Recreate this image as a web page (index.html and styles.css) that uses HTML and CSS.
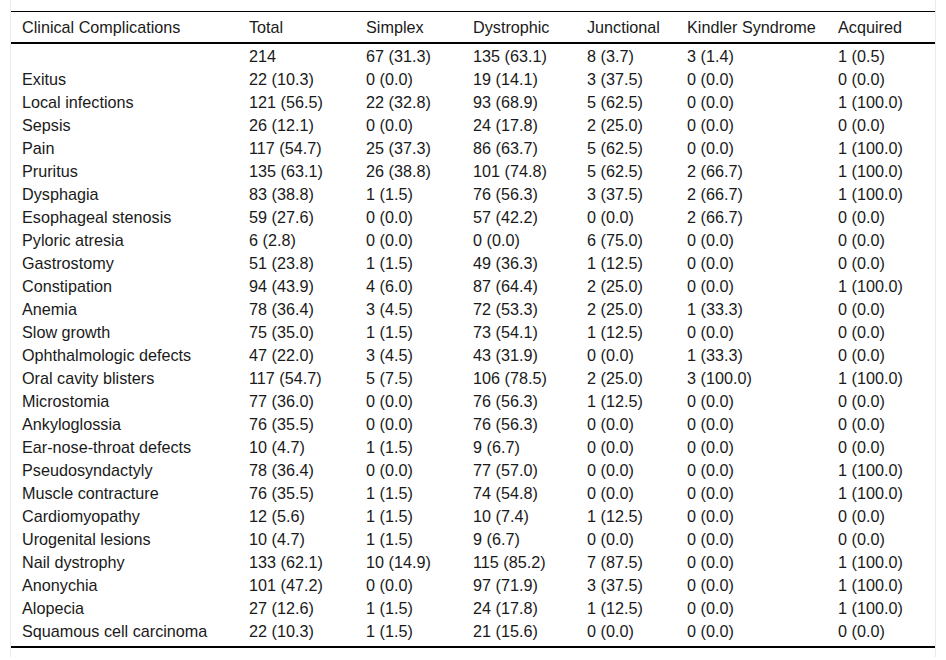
FILE: index.html
```html
<!DOCTYPE html>
<html>
<head>
<meta charset="utf-8">
<link rel="stylesheet" href="styles.css">
</head>
<body>
<div class="wrap">
<table class="tbl">
<colgroup>
<col class="c1"><col class="c2"><col class="c3"><col class="c4"><col class="c5"><col class="c6"><col class="c7">
</colgroup>
<thead>
<tr><th>Clinical Complications</th><th>Total</th><th>Simplex</th><th>Dystrophic</th><th>Junctional</th><th>Kindler Syndrome</th><th>Acquired</th></tr>
</thead>
<tbody>
<tr><td></td><td>214</td><td>67 (31.3)</td><td>135 (63.1)</td><td>8 (3.7)</td><td>3 (1.4)</td><td>1 (0.5)</td></tr>
<tr><td>Exitus</td><td>22 (10.3)</td><td>0 (0.0)</td><td>19 (14.1)</td><td>3 (37.5)</td><td>0 (0.0)</td><td>0 (0.0)</td></tr>
<tr><td>Local infections</td><td>121 (56.5)</td><td>22 (32.8)</td><td>93 (68.9)</td><td>5 (62.5)</td><td>0 (0.0)</td><td>1 (100.0)</td></tr>
<tr><td>Sepsis</td><td>26 (12.1)</td><td>0 (0.0)</td><td>24 (17.8)</td><td>2 (25.0)</td><td>0 (0.0)</td><td>0 (0.0)</td></tr>
<tr><td>Pain</td><td>117 (54.7)</td><td>25 (37.3)</td><td>86 (63.7)</td><td>5 (62.5)</td><td>0 (0.0)</td><td>1 (100.0)</td></tr>
<tr><td>Pruritus</td><td>135 (63.1)</td><td>26 (38.8)</td><td>101 (74.8)</td><td>5 (62.5)</td><td>2 (66.7)</td><td>1 (100.0)</td></tr>
<tr><td>Dysphagia</td><td>83 (38.8)</td><td>1 (1.5)</td><td>76 (56.3)</td><td>3 (37.5)</td><td>2 (66.7)</td><td>1 (100.0)</td></tr>
<tr><td>Esophageal stenosis</td><td>59 (27.6)</td><td>0 (0.0)</td><td>57 (42.2)</td><td>0 (0.0)</td><td>2 (66.7)</td><td>0 (0.0)</td></tr>
<tr><td>Pyloric atresia</td><td>6 (2.8)</td><td>0 (0.0)</td><td>0 (0.0)</td><td>6 (75.0)</td><td>0 (0.0)</td><td>0 (0.0)</td></tr>
<tr><td>Gastrostomy</td><td>51 (23.8)</td><td>1 (1.5)</td><td>49 (36.3)</td><td>1 (12.5)</td><td>0 (0.0)</td><td>0 (0.0)</td></tr>
<tr><td>Constipation</td><td>94 (43.9)</td><td>4 (6.0)</td><td>87 (64.4)</td><td>2 (25.0)</td><td>0 (0.0)</td><td>1 (100.0)</td></tr>
<tr><td>Anemia</td><td>78 (36.4)</td><td>3 (4.5)</td><td>72 (53.3)</td><td>2 (25.0)</td><td>1 (33.3)</td><td>0 (0.0)</td></tr>
<tr><td>Slow growth</td><td>75 (35.0)</td><td>1 (1.5)</td><td>73 (54.1)</td><td>1 (12.5)</td><td>0 (0.0)</td><td>0 (0.0)</td></tr>
<tr><td>Ophthalmologic defects</td><td>47 (22.0)</td><td>3 (4.5)</td><td>43 (31.9)</td><td>0 (0.0)</td><td>1 (33.3)</td><td>0 (0.0)</td></tr>
<tr><td>Oral cavity blisters</td><td>117 (54.7)</td><td>5 (7.5)</td><td>106 (78.5)</td><td>2 (25.0)</td><td>3 (100.0)</td><td>1 (100.0)</td></tr>
<tr><td>Microstomia</td><td>77 (36.0)</td><td>0 (0.0)</td><td>76 (56.3)</td><td>1 (12.5)</td><td>0 (0.0)</td><td>0 (0.0)</td></tr>
<tr><td>Ankyloglossia</td><td>76 (35.5)</td><td>0 (0.0)</td><td>76 (56.3)</td><td>0 (0.0)</td><td>0 (0.0)</td><td>0 (0.0)</td></tr>
<tr><td>Ear-nose-throat defects</td><td>10 (4.7)</td><td>1 (1.5)</td><td>9 (6.7)</td><td>0 (0.0)</td><td>0 (0.0)</td><td>0 (0.0)</td></tr>
<tr><td>Pseudosyndactyly</td><td>78 (36.4)</td><td>0 (0.0)</td><td>77 (57.0)</td><td>0 (0.0)</td><td>0 (0.0)</td><td>1 (100.0)</td></tr>
<tr><td>Muscle contracture</td><td>76 (35.5)</td><td>1 (1.5)</td><td>74 (54.8)</td><td>0 (0.0)</td><td>0 (0.0)</td><td>1 (100.0)</td></tr>
<tr><td>Cardiomyopathy</td><td>12 (5.6)</td><td>1 (1.5)</td><td>10 (7.4)</td><td>1 (12.5)</td><td>0 (0.0)</td><td>0 (0.0)</td></tr>
<tr><td>Urogenital lesions</td><td>10 (4.7)</td><td>1 (1.5)</td><td>9 (6.7)</td><td>0 (0.0)</td><td>0 (0.0)</td><td>0 (0.0)</td></tr>
<tr><td>Nail dystrophy</td><td>133 (62.1)</td><td>10 (14.9)</td><td>115 (85.2)</td><td>7 (87.5)</td><td>0 (0.0)</td><td>1 (100.0)</td></tr>
<tr><td>Anonychia</td><td>101 (47.2)</td><td>0 (0.0)</td><td>97 (71.9)</td><td>3 (37.5)</td><td>0 (0.0)</td><td>1 (100.0)</td></tr>
<tr><td>Alopecia</td><td>27 (12.6)</td><td>1 (1.5)</td><td>24 (17.8)</td><td>1 (12.5)</td><td>0 (0.0)</td><td>1 (100.0)</td></tr>
<tr><td>Squamous cell carcinoma</td><td>22 (10.3)</td><td>1 (1.5)</td><td>21 (15.6)</td><td>0 (0.0)</td><td>0 (0.0)</td><td>0 (0.0)</td></tr>
</tbody>
</table>
</div>
</body>
</html>
```

FILE: styles.css
```css
html, body {
  margin: 0;
  padding: 0;
  background: #ffffff;
}
.wrap {
  margin: 0 10px;
  border-left: 1px solid #ebebeb;
  border-right: 1px solid #ebebeb;
  padding: 11px 0 9px 0;
}
.tbl {
  width: 100%;
  border-collapse: collapse;
  table-layout: fixed;
  font-family: "Liberation Sans", Arial, sans-serif;
  font-size: 16.2px;
  color: #1a1a1a;
  border-top: 1px solid #000;
  border-bottom: 2px solid #000;
}
.c1 { width: 227px; }
.c2 { width: 117px; }
.c3 { width: 107px; }
.c4 { width: 114px; }
.c5 { width: 100px; }
.c6 { width: 151px; }
.c7 { width: 108px; }
.tbl th {
  font-weight: normal;
  text-align: left;
  padding: 6px 11px 5px 11px;
  line-height: 19px;
  border-bottom: 2px solid #000;
  white-space: nowrap;
}
.tbl td {
  text-align: left;
  padding: 0 11px;
  line-height: 23px;
  height: 23px;
  white-space: nowrap;
}
.tbl tbody tr:first-child td {
  padding-top: 1px;
}
.tbl tbody tr:last-child td {
  padding-bottom: 3px;
}
```
